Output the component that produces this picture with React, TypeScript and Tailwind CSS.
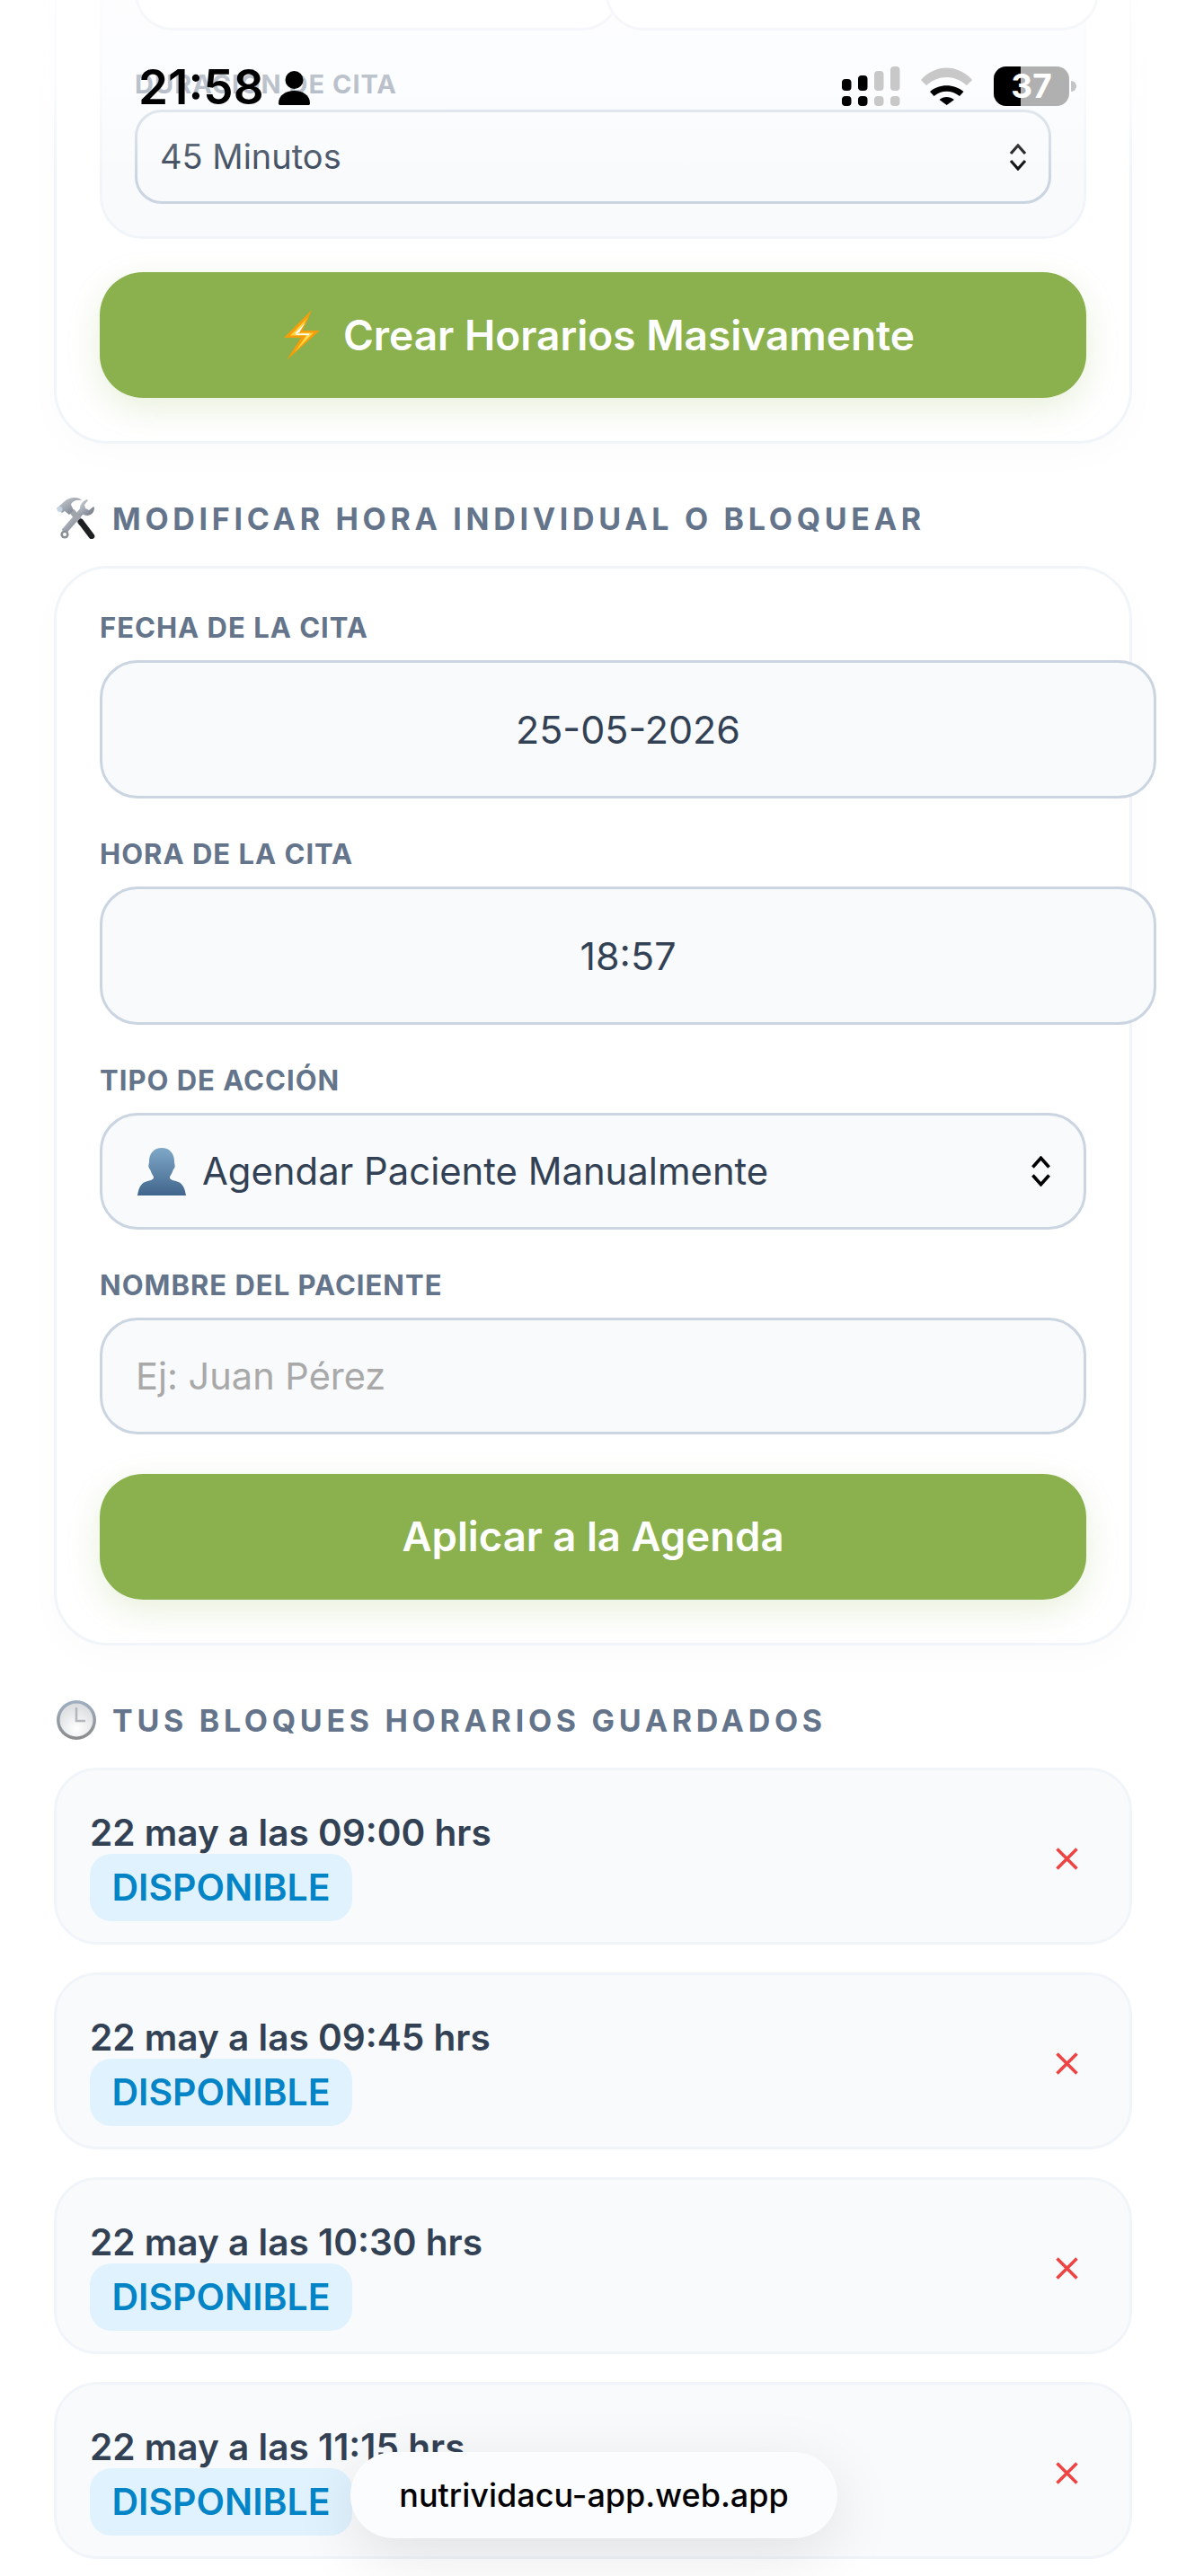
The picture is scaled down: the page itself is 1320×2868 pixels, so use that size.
import React from "react";

const inputBox =
  "rounded-[42px] border-[3px] border-[#cbd5e1] bg-[#f8fafc] text-[#334155]";

const Chevrons = ({ className }: { className: string }) => (
  <svg viewBox="0 0 20 30" fill="none" stroke="#000" strokeWidth="3.2" className={className}>
    <path d="M2 11 10 2l8 9" />
    <path d="M2 19l8 9 8-9" />
  </svg>
);

const Bolt = () => (
  <svg viewBox="0 0 40 56" className="h-[56px] w-[40px] shrink-0">
    <path d="M31 0 0 31h19L3 56 40 23H21Z" fill="#f59e0b" />
    <path d="M27 8 7 28.5h18L12 47 33 25.5H15.5Z" fill="#ffd43b" />
    <path d="M24 14 12 26.5h17L21 36 27 28H12.5l5-3.5Z" fill="#fff" />
  </svg>
);

const Tools = () => (
  <svg viewBox="0 0 44 46" className="h-[46px] w-[44px] shrink-0">
    <defs>
      <linearGradient id="steel" x1="0" y1="0" x2="1" y2="1">
        <stop offset="0" stopColor="#d1d5db" />
        <stop offset="1" stopColor="#6b7280" />
      </linearGradient>
    </defs>
    <path d="M8 38 29 14" stroke="url(#steel)" strokeWidth="6.5" fill="none" />
    <circle cx="9" cy="41" r="4.6" fill="#8b8f96" />
    <circle cx="9" cy="41" r="2" fill="#fff" />
    <path d="M27 17c-3-5 0-13 7-15l1 1-4 5 1 4 4 2 5-4 1 1c0 8-8 12-15 6Z" fill="url(#steel)" />
    <path d="M17 15 28 29" stroke="#a1a5ab" strokeWidth="6.5" fill="none" />
    <path d="M27 27 39 43" stroke="#1f2023" strokeWidth="6.5" strokeLinecap="round" fill="none" />
    <path d="M0 12 9 4c6-5 15-5 19-1-6-1-11 1-12 5l3 6-5 5-5-4-3 2Z" fill="url(#steel)" />
    <circle cx="3.5" cy="13" r="3" fill="#c4d4e4" />
  </svg>
);

const Clock = () => (
  <svg viewBox="0 0 44 44" className="h-[44px] w-[44px] shrink-0">
    <defs>
      <linearGradient id="rim" x1="0" y1="0" x2="0" y2="1">
        <stop offset="0" stopColor="#9fb0c2" />
        <stop offset="1" stopColor="#8a8a8a" />
      </linearGradient>
      <radialGradient id="face" cx="0.5" cy="0.75" r="0.8">
        <stop offset="0" stopColor="#fff" />
        <stop offset="1" stopColor="#d6d8db" />
      </radialGradient>
    </defs>
    <circle cx="22" cy="22" r="22" fill="url(#rim)" />
    <circle cx="22" cy="22" r="18.5" fill="url(#face)" />
    <path d="M22 8v15h10" fill="none" stroke="#b4b8bd" strokeWidth="2.6" />
  </svg>
);

const Person = () => (
  <svg viewBox="0 0 54 53" className="h-[53px] w-[54px] shrink-0">
    <defs>
      <linearGradient id="bust" x1="0" y1="0" x2="0" y2="1">
        <stop offset="0" stopColor="#7fa8c8" />
        <stop offset="1" stopColor="#41658c" />
      </linearGradient>
    </defs>
    <path
      d="M27 0c8.500 0 14 6 14 15 0 3 1 4 .6 6-.4 2-1.600 2.500-2.100 4-.9 3-2.500 5.500-3.500 7-.500 2 1 3.500 5 4.500 7 1.500 11 4 13 16.500H0c2-12.500 6-15 13-16.500 4-1 5.500-2.500 5-4.500-1-1.500-2.600-4-3.500-7-.5-1.500-1.700-2-2.100-4-.4-2 .6-3 .6-6C13 6 18.500 0 27 0Z"
      fill="url(#bust)"
    />
  </svg>
);

const Field = ({ label, children }: { label: string; children: React.ReactNode }) => (
  <div className="mb-[44px]">
    <div className="mb-[18px] text-[31px] leading-[36px] font-bold tracking-[1px] text-[#64748b]">{label}</div>
    {children}
  </div>
);

const SectionTitle = ({ icon, title, className }: { icon: React.ReactNode; title: string; className: string }) => (
  <div className={`flex h-[46px] items-center gap-[18px] pl-[3px] ${className}`}>
    {icon}
    <h2 className="text-[34px] font-bold tracking-[4.7px] whitespace-nowrap text-[#64748b]">{title}</h2>
  </div>
);

const Slot = ({ time }: { time: string }) => (
  <div className="flex items-center justify-between rounded-[48px] border-[3px] border-[#f1f5f9] bg-[#f8fafc] py-[23px] pr-[57px] pl-[37px]">
    <div className="pt-[23px]">
      <div className="h-[47px] text-[40.6px] leading-[47px] font-semibold text-[#334155]">22 may a las {time} hrs</div>
      <span className="flex h-[75px] w-[292px] items-center justify-center rounded-[24px] bg-[#e0f2fe] text-[41px] font-semibold text-[#0284c7]">
        DISPONIBLE
      </span>
    </div>
    <svg viewBox="0 0 25 25" stroke="#ef4444" strokeWidth="3.6" className="mt-[6px] h-[25px] w-[25px]">
      <path d="M1.500 1.500 23.500 23.500M23.500 1.500 1.500 23.500" />
    </svg>
  </div>
);

const StatusBar = () => (
  <div className="absolute top-0 right-0 left-0 h-[200px] bg-gradient-to-b from-white/70 via-white/55 via-50% to-white/0 pt-[74px] pr-[122px] pl-[154px]">
    <div className="flex items-start justify-between">
      <div className="flex items-center gap-[16px]">
        <span className="text-[53px] leading-[46px] font-semibold text-black">21:58</span>
        <svg viewBox="0 0 35 38" className="mt-[2px] h-[38px] w-[35px]">
          <circle cx="17.500" cy="10" r="10" />
          <path d="M0 36c0-9 8-14 17.500-14S35 27 35 36c0 1.500-.8 2-2 2H2c-1.200 0-2-.5-2-2Z" />
        </svg>
      </div>
      <div className="flex items-start">
        <svg viewBox="0 0 65 44" className="h-[44px] w-[65px]">
          <g fill="#000">
            <rect x="0" y="14" width="10.500" height="13" rx="4" />
            <rect x="18" y="10" width="10.500" height="17" rx="4" />
            <rect x="0" y="33" width="10.500" height="11" rx="4" />
            <rect x="18" y="33" width="10.500" height="11" rx="4" />
          </g>
          <g fill="#c8c8c8">
            <rect x="36" y="5" width="10.500" height="22" rx="4" />
            <rect x="54" y="0" width="10.500" height="27" rx="4" />
            <rect x="36" y="33" width="10.500" height="11" rx="4" />
            <rect x="54" y="33" width="10.500" height="11" rx="4" />
          </g>
        </svg>
        <svg viewBox="0 0 57 42" className="mt-[1px] ml-[23px] h-[42px] w-[57px]">
          <path d="M0 14C16-4 41-4 57 14l-6 6C37 8 20 8 6 20Z" fill="#c8c8c8" />
          <path d="M10 27c10-9 27-9 37.500 0L43 32c-9-7-20-7-28.500 0Z" />
          <path d="M20.500 36c4.500-4 11.500-4 16.500 0l-8.300 6Z" />
        </svg>
        <div className="relative ml-[24px] flex h-[44px] w-[84px] overflow-hidden rounded-[14px] bg-[#b0b0b0]">
          <div className="w-[30px] bg-black" />
          <span className="absolute inset-0 flex items-center justify-center text-[37px] font-bold text-white">37</span>
        </div>
        <div className="mt-[16px] ml-[2px] h-[12px] w-[6px] rounded-r-full bg-[#c4c4c4]" />
      </div>
    </div>
  </div>
);

const App: React.FC = () => {
  return (
    <div className="relative h-[2868px] overflow-hidden bg-white font-['Inter',sans-serif]">
      <div className="-mt-[186px] px-[60px]">
        {/* Bulk schedule card, scrolled past the top */}
        <div className="rounded-[60px] border-[3px] border-[#f1f5f9] bg-white p-[48px] shadow-[0_12px_40px_rgba(15,23,42,0.02)]">
          <div className="rounded-[48px] border-[3px] border-[#f1f5f9] bg-[#f8fafc] p-[36px]">
            <div className="flex">
              <div className="h-[130px] w-[540px] shrink-0 rounded-[42px] border-[3px] border-[#e2e8f0] bg-white" />
              <div className="-ml-[16px] h-[130px] w-[549px] shrink-0 rounded-[42px] border-[3px] border-[#e2e8f0] bg-white" />
            </div>
            <div className="mt-[42px] mb-[10px] h-[36px] text-[29px] leading-[36px] font-bold tracking-[1px] text-[#64748b]">
              DURACIÓN DE CITA
            </div>
            <div className="flex h-[105px] items-center justify-between rounded-[30px] border-[3px] border-[#cbd5e1] bg-[#f8fafc] pr-[24px] pl-[25px] text-[38px] text-[#334155]">
              45 Minutos
              <Chevrons className="h-[30px] w-[20px]" />
            </div>
          </div>
          <button className="mt-[37px] flex h-[140px] w-full items-center justify-center gap-[26px] rounded-[48px] bg-[#8ab14d] pl-[14px] text-[46px] font-semibold text-white shadow-[0_12px_36px_rgba(139,178,78,0.2)]">
            <Bolt />
            Crear Horarios Masivamente
          </button>
        </div>

        <SectionTitle icon={<Tools />} title="MODIFICAR HORA INDIVIDUAL O BLOQUEAR" className="mt-[60px] mb-[30px]" />

        {/* Single slot form */}
        <div className="rounded-[60px] border-[3px] border-[#f1f5f9] bg-white p-[48px] shadow-[0_12px_40px_rgba(15,23,42,0.02)]">
          <Field label="FECHA DE LA CITA">
            <div className={`${inputBox} flex h-[154px] w-[1176px] items-center justify-center text-[43px]`}>25-05-2026</div>
          </Field>
          <Field label="HORA DE LA CITA">
            <div className={`${inputBox} flex h-[154px] w-[1176px] items-center justify-center text-[43px]`}>18:57</div>
          </Field>
          <Field label="TIPO DE ACCIÓN">
            <div className={`${inputBox} flex h-[130px] items-center justify-between pr-[36px] pl-[39px] text-[41.8px]`}>
              <span className="flex items-center gap-[18px]">
                <Person />
                Agendar Paciente Manualmente
              </span>
              <Chevrons className="h-[34px] w-[23px]" />
            </div>
          </Field>
          <Field label="NOMBRE DEL PACIENTE">
            <input
              placeholder="Ej: Juan Pérez"
              className={`${inputBox} block h-[130px] w-full px-[37px] text-[41.5px] outline-none placeholder:text-[#a9a9a9]`}
            />
          </Field>
          <button className="flex h-[140px] w-full items-center justify-center rounded-[48px] bg-[#8ab14d] text-[45.5px] font-semibold text-white shadow-[0_12px_36px_rgba(139,178,78,0.2)]">
            Aplicar a la Agenda
          </button>
        </div>

        <SectionTitle icon={<Clock />} title="TUS BLOQUES HORARIOS GUARDADOS" className="mt-[60px] mb-[30px]" />

        <div className="flex flex-col gap-[31px]">
          <Slot time="09:00" />
          <Slot time="09:45" />
          <Slot time="10:30" />
          <Slot time="11:15" />
        </div>
      </div>

      <StatusBar />

      {/* Safari address pill */}
      <div className="absolute top-[2730px] left-[390px] flex h-[96px] w-[542px] items-center justify-center rounded-[48px] bg-[#fbfcfe] text-[36px] font-medium text-black shadow-[0_18px_70px_rgba(0,0,0,0.1)]">
        nutrividacu-app.web.app
      </div>
    </div>
  );
};

export default App;
